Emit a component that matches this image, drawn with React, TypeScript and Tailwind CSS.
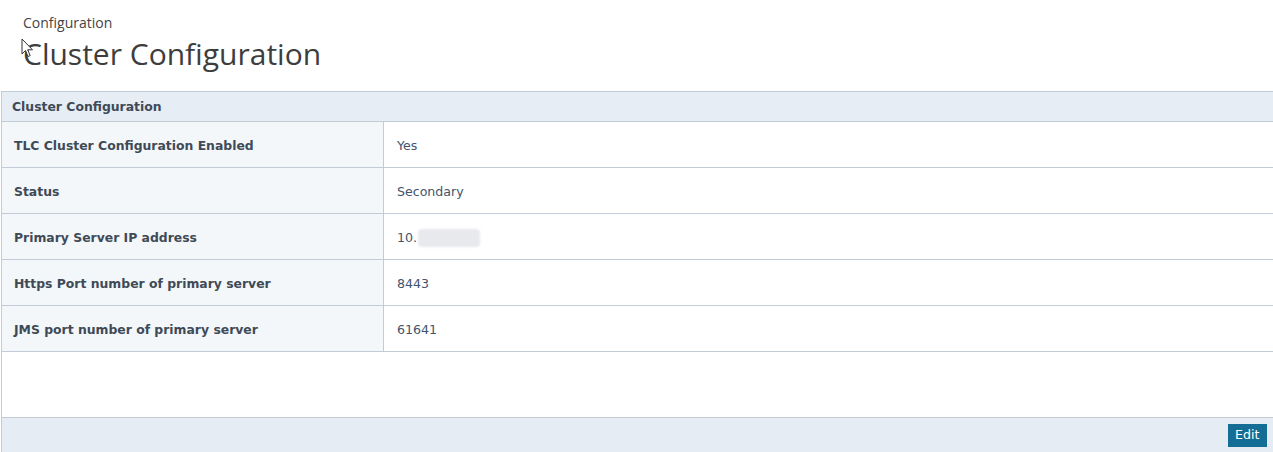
const rows = [
  { label: 'TLC Cluster Configuration Enabled', value: 'Yes' },
  { label: 'Status', value: 'Secondary' },
  { label: 'Primary Server IP address', value: '10.', masked: true },
  { label: 'Https Port number of primary server', value: '8443' },
  { label: 'JMS port number of primary server', value: '61641' },
]

export default function App() {
  return (
    <div className="relative h-[452px] w-[1273px] overflow-hidden bg-white font-['Open_Sans',sans-serif]">
      {/* Page heading */}
      <div className="px-[23px] pt-[13px]">
        <p className="text-[14px] leading-[20px] text-[#444]">Configuration</p>
        <h1 className="mt-[1px] text-[30px] leading-[40px] text-[#3d3d3d]">Cluster Configuration</h1>
      </div>

      {/* mouse pointer */}
      <svg className="absolute left-[21px] top-[38px]" width="14" height="20" viewBox="0 0 14 20">
        <path d="M1 1 L1 16 L4.5 12.5 L7 18.5 L9.2 17.6 L6.7 11.8 L11.5 11.8 Z" fill="white" stroke="#333" strokeWidth="1" strokeLinejoin="round" />
      </svg>

      {/* Panel */}
      <div className="ml-px mt-[17px] flex h-[361px] flex-col border-l border-t border-[#c3ccd6] font-['DejaVu_Sans',Verdana,sans-serif]">
        <div className="flex h-[30px] shrink-0 items-center border-b border-[#c3ccd6] bg-[#e6edf4] px-[10px] pt-[2px] text-[12.4px] font-bold text-[#3f4a57]">
          Cluster Configuration
        </div>

        <div className="flex flex-col">
          {rows.map((row) => (
            <div key={row.label} className="flex h-[46px] border-b border-[#c3ccd6]">
              <div className="flex w-[382px] shrink-0 items-center border-r border-[#c3ccd6] bg-[#f3f7fa] px-[12px] pt-[3px] text-[12.4px] font-bold text-[#3f4a57]">
                {row.label}
              </div>
              <div className="flex flex-1 items-center px-[13px] pt-[3px] text-[12.6px] text-[#42546b]">
                {row.value}
                {row.masked && <span className="ml-[1px] h-[18px] w-[62px] rounded-sm bg-[#e8e9ec] blur-[1px]" />}
              </div>
            </div>
          ))}
        </div>

        <div className="flex-1" />

        <div className="flex h-[35px] shrink-0 items-center justify-end border-t border-[#c3ccd6] bg-[#e6ecf3] pr-[6px]">
          <button className="h-[23px] bg-[#146d94] px-[7.5px] text-[12.6px] text-white">Edit</button>
        </div>
      </div>
    </div>
  )
}
